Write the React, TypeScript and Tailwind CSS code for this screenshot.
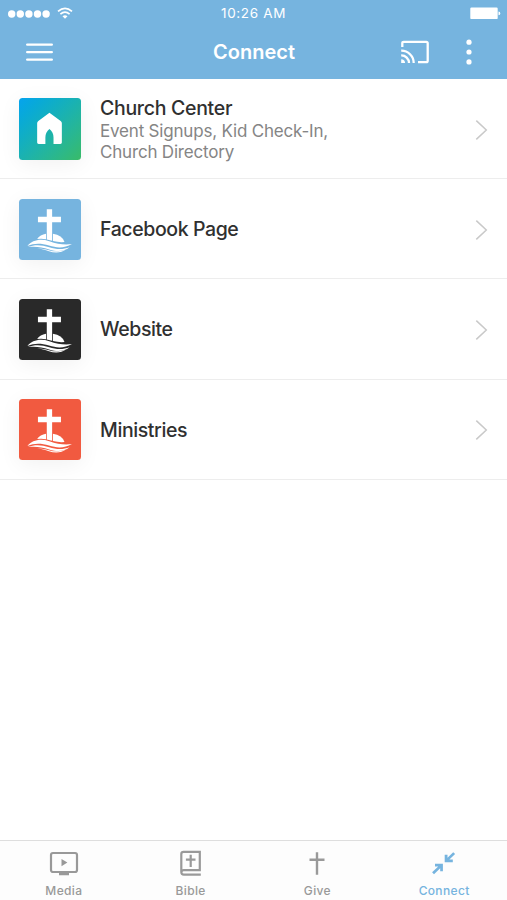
import type { ReactNode } from "react";
import clsx from "clsx";

type LinkItem = {
  title: string;
  lines?: string[];
  tile: string;
  icon: ReactNode;
};

type Tab = {
  label: string;
  icon: ReactNode;
  active?: boolean;
};

function HouseIcon() {
  return (
    <svg viewBox="0 0 62 62" className="size-full" fill="#fff">
      <path d="M30.700 14.800 42 23.200q1.200.9 1.200 2.300v19.400q0 1.500-1.500 1.500h-6.900v-6.600q0-5.200-4.100-8.500-4.100 3.300-4.100 8.500v6.600h-6.800q-1.500 0-1.500-1.500V25.500q0-1.400 1.200-2.300z" />
    </svg>
  );
}

function CrossLogo() {
  return (
    <svg viewBox="0 0 62 62" className="size-full" fill="#fff">
      <path d="M28 10.300h5.400v7.700h8.900v5.500h-8.900v18.700L28 40.900V23.500h-8.900V18H28z" />
      <path d="M18.300 40.300q3-4.500 8.900-5.300v5.500q-4.400-.9-8.900-.2z" />
      <path d="M34.200 35q9.200 1.100 11.700 8.400-5.600.6-11.700-1z" />
      <path d="M8.500 47.400c4.800-6.200 13.100-7.800 22-4.900 8.500 2.900 15.300 4 22.900 2.900-7.300 4.200-14.800 4.300-23.100 1.600-8.300-2.700-14.900-2.700-21.800.4z" />
      <path d="M9 48.500c6.700-2.600 13.500-2.400 21.400.2 7.400 2.300 13.900 2.400 20.700 0-6 4.600-13.100 4.600-20.700 2.100-7.300-2.300-13.900-3.200-21.400-2.300z" />
      <path d="M18 49.900c4.500 0 8.500.5 12.200 1.700 6 1.800 11.500 1.600 17.300-.9-4.900 3.700-11.300 3.900-17.300 1.900-4-1.400-7.500-2.400-12.200-2.700z" />
    </svg>
  );
}

const LINKS: LinkItem[] = [
  {
    title: "Church Center",
    lines: ["Event Signups, Kid Check-In,", "Church Directory"],
    tile: "bg-linear-135 from-[#07a3ee] to-[#39bb67]",
    icon: <HouseIcon />,
  },
  { title: "Facebook Page", tile: "bg-[#76b4df]", icon: <CrossLogo /> },
  { title: "Website", tile: "bg-[#292929]", icon: <CrossLogo /> },
  { title: "Ministries", tile: "bg-[#f15a40]", icon: <CrossLogo /> },
];

const TABS: Tab[] = [
  {
    label: "Media",
    icon: (
      <svg viewBox="0 0 30 28" className="h-7 w-[30px]">
        <rect x="2" y="3" width="26" height="19" rx="2" fill="none" stroke="currentColor" strokeWidth="2.200" />
        <path d="M12.500 9v7.200l5.900-3.600zM10 22h10v3.200H10z" fill="currentColor" />
      </svg>
    ),
  },
  {
    label: "Bible",
    icon: (
      <svg viewBox="0 0 30 28" className="h-7 w-[30px]" fill="none" stroke="currentColor" strokeWidth="2.200">
        <path d="M24.800 24.600H7.900a2.600 2.600 0 0 1-2.600-2.600V4Q5.300 1.800 7.500 1.800h16.300v18.300H7.900a2.400 2.400 0 0 0-2.500 2" />
        <path d="M14.700 4.800V17M9.900 9.600h9.600" />
      </svg>
    ),
  },
  {
    label: "Give",
    icon: (
      <svg viewBox="0 0 30 28" className="h-7 w-[30px]" fill="none" stroke="currentColor" strokeWidth="2.400">
        <path d="M15 2.200v22.500M7.500 9.800h15" />
      </svg>
    ),
  },
  {
    label: "Connect",
    active: true,
    icon: (
      <svg viewBox="0 0 30 28" className="h-7 w-[30px]" fill="currentColor">
        <path d="M15.700 4.700v7.500h8.100V9.600h-3.400l5.700-5.500-1.900-1.900-5.700 5.500v-3z" />
        <path d="M6 13.800h7.900v7.500h-2.700v-3L5 24.200l-1.900-1.900 6.100-5.900H6z" />
      </svg>
    ),
  },
];

function StatusBar() {
  return (
    <div className="flex h-[27px] items-center justify-between pl-2 pr-[6px]">
      <div className="flex w-20 items-center">
        <svg viewBox="0 0 42 8" className="h-2 w-[42px]" fill="#fff">
          <circle cx="3.700" cy="4" r="3.700" />
          <circle cx="12.300" cy="4" r="3.700" />
          <circle cx="20.900" cy="4" r="3.700" />
          <circle cx="29.500" cy="4" r="3.700" />
          <circle cx="38.100" cy="4" r="3.700" />
        </svg>
        <svg viewBox="0 0 16 13" className="ml-[7px] h-[13px] w-4" fill="none" stroke="#fff" strokeWidth="1.700">
          <path d="M1 4.400q7-6 14 0M3.400 7.100q4.600-3.800 9.200 0" />
          <path d="M8 11.800 5.500 9.300q2.500-2 5 0z" fill="#fff" stroke="none" />
        </svg>
      </div>
      <span className="-ml-[2px] mt-px text-[13.500px] leading-none tracking-[0.650px]">10:26 AM</span>
      <div className="flex w-20 justify-end">
        <svg viewBox="0 0 31 13" className="h-[13px] w-[31px]" fill="#fff">
          <rect x="0.300" y="0.500" width="27.400" height="11.600" rx="1.200" />
          <path d="M28.500 4.500q1.800.3 1.800 1.900t-1.800 1.900z" />
        </svg>
      </div>
    </div>
  );
}

function NavBar() {
  return (
    <div className="flex h-[52px] items-center justify-between pb-[2px] pl-[26px] pr-[34px]">
      <div className="w-[80px]">
        <svg viewBox="0 0 27 20" className="h-5 w-[27px]" stroke="#fff" strokeWidth="2.400" strokeLinecap="round">
          <path d="M1.200 2.600h24.600M1.200 10.100h24.600M1.200 17.600h24.600" />
        </svg>
      </div>
      <h1 className="ml-[2px] text-[20px] font-semibold leading-none">Connect</h1>
      <div className="flex w-[73px] items-center justify-between">
        <svg viewBox="0 0 28 24" className="ml-px h-6 w-7" fill="none" stroke="#fff" strokeWidth="2.300">
          <path d="M1.300 7V3.200Q1.300 1.800 2.700 1.800h22.600q1.400 0 1.400 1.400v17.500q0 1.400-1.400 1.400H17" />
          <path d="M.2 10.700A12.300 12.300 0 0 1 12.700 23M.2 15.400A7.600 7.600 0 0 1 8 23" />
          <path d="M.2 19.200A4 4 0 0 1 4.100 23H.2z" fill="#fff" stroke="none" />
        </svg>
        <svg viewBox="0 0 6 26" className="mr-[1.500px] h-[26px] w-[6px]" fill="#fff">
          <circle cx="3" cy="3.200" r="2.600" />
          <circle cx="3" cy="13" r="2.600" />
          <circle cx="3" cy="22.900" r="2.600" />
        </svg>
      </div>
    </div>
  );
}

function LinkRow({ item }: { item: LinkItem }) {
  return (
    <li className="flex h-[100.200px] items-center border-b border-[#ededed] px-[19px] pt-px">
      <div className={clsx("size-[61.500px] shrink-0 overflow-hidden rounded-[3.500px] shadow-[0_4px_22px_rgba(0,0,0,0.06)]", item.tile)}>
        {item.icon}
      </div>
      <div className="ml-[19.500px] flex-1">
        <h2
          className={clsx(
            "text-[19.500px] font-medium leading-6 text-[#303030]",
            item.lines ? "tracking-[-0.300px]" : "tracking-[-0.400px]",
          )}
        >
          {item.title}
        </h2>
        {item.lines && (
          <p className="mt-[1.400px] text-[17px] leading-[20.500px] tracking-[-0.190px] text-[#858585]">
            {item.lines.map((line) => (
              <span key={line} className="block">
                {line}
              </span>
            ))}
          </p>
        )}
      </div>
      <svg viewBox="0 0 13 22" className="mt-px h-[22px] w-[13px]" fill="none" stroke="#c9c9c9" strokeWidth="1.500">
        <path d="m1.300 1.600 10 9.400-10 9.400" />
      </svg>
    </li>
  );
}

export default function App() {
  return (
    <div className="flex h-[900px] w-full flex-col overflow-hidden bg-white font-['Inter',sans-serif]">
      <header className="bg-[#76b4df] text-white">
        <StatusBar />
        <NavBar />
      </header>
      <ul className="flex-1">
        {LINKS.map((item) => (
          <LinkRow key={item.title} item={item} />
        ))}
      </ul>
      <nav className="grid h-[60px] grid-cols-4 border-t border-[#dedede] bg-[#fdfdfd]">
        {TABS.map((tab) => (
          <div
            key={tab.label}
            className={clsx(
              "flex flex-col items-center pl-px pt-[9px]",
              tab.active ? "text-[#76b4df]" : "text-[#999]",
            )}
          >
            {tab.icon}
            <span className="mt-[5px] text-[12px] font-medium leading-[15px] tracking-[0.350px]">{tab.label}</span>
          </div>
        ))}
      </nav>
    </div>
  );
}
